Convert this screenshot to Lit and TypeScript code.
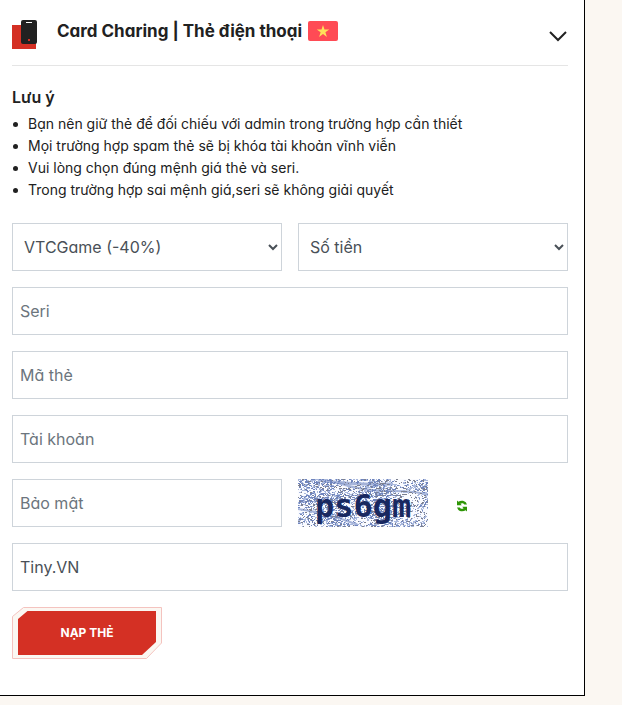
import { LitElement, html, css } from "lit";
import { customElement, state } from "lit/decorators.js";

const CAPTCHA_W = 130;
const CAPTCHA_H = 48;

/* Builds one path of short speckles from a seeded generator. */
function speckles(seed: number, density: (x: number, y: number) => number): string {
  let s = seed;
  const next = () => {
    s = (Math.imul(s, 1664525) + 1013904223) >>> 0;
    return s / 4294967296;
  };
  let d = "";
  for (let y = 0; y < CAPTCHA_H; y++) {
    for (let x = 0; x < CAPTCHA_W; x++) {
      if (next() < density(x, y)) {
        const w = next() < 0.4 ? 2 : 1;
        d += `M${x} ${y}h${w}v1h-${w}z`;
      }
    }
  }
  return d;
}

const band = (x: number, y: number) => Math.sin(x / 13 + y / 7) * Math.cos(y / 5 - x / 31);
const LIGHT = speckles(11, (x, y) => 0.26 + 0.16 * band(x, y));
const MID = speckles(29, (x, y) => (x < 95 ? 0.18 : 0.1) + 0.14 * band(x, y));
const DARK = speckles(73, () => 0.08);

@customElement("captcha-image")
export class CaptchaImage extends LitElement {
  static styles = css`
    :host {
      display: block;
    }
    .image {
      display: block;
      font-family: "DejaVu Sans Mono", monospace;
      font-weight: 700;
      font-size: 32px;
    }
  `;

  render() {
    return html`<svg class="image" width="130" height="48" viewBox="0 0 130 48" role="img" aria-label="Captcha">
      <rect width="130" height="48" fill="#fafbff" />
      <g fill="none" stroke="#7f93c8" stroke-opacity=".7" stroke-width="3">
        <path d="M20 1Q50 6 95 5" />
        <path d="M40 4Q65 12 92 12T130 16" stroke-width="2" />
        <path d="M0 30Q30 34 60 46" stroke-width="2" />
      </g>
      <g shape-rendering="crispEdges">
        <path d=${LIGHT} fill="#a9b8dd" />
        <path d=${MID} fill="#7085bd" />
        <path d=${DARK} fill="#7c8090" />
      </g>
      <text x="17" y="38" fill="#182860">ps6gm</text>
    </svg>`;
  }
}

@customElement("app-root")
export class AppRoot extends LitElement {
  @state() private open = true;

  static styles = css`
    :host {
      display: block;
      box-sizing: border-box;
      min-height: 100vh;
      padding: 0 37px 9px 0;
      background: #fbf7f2;
      color: #212121;
      font-family: Inter, "Noto Sans", sans-serif;
      font-feature-settings: "cv11";
    }
    * {
      box-sizing: border-box;
    }
    .panel {
      padding: 0 16px 36px 12px;
      background: #fff;
      border: solid #000;
      border-width: 0 1px 1px 0;
    }
    .head {
      display: flex;
      align-items: center;
      height: 66px;
      border-bottom: 1px solid #e5e5e5;
    }
    .phone {
      flex: none;
      margin: 4px 19px 0 0;
    }
    .title {
      flex: 1;
      display: flex;
      align-items: center;
      gap: 6px;
      margin: 0;
      padding-bottom: 4px;
      font-size: 17px;
      line-height: 24px;
      font-weight: 700;
      white-space: nowrap;
    }
    .toggle {
      display: flex;
      padding: 6px 0 0;
      border: 0;
      background: none;
      cursor: pointer;
    }
    .note {
      margin: 19px 0 4px;
      font-size: 16px;
      line-height: 24px;
      font-weight: 600;
    }
    .rules {
      display: flex;
      flex-direction: column;
      margin: 0 0 22px;
      padding: 0;
      list-style: none;
      font-size: 14px;
      line-height: 22px;
    }
    .rule {
      display: flex;
      align-items: center;
      gap: 10px;
    }
    .rule::before {
      content: "";
      flex: none;
      width: 5px;
      height: 5px;
      margin-left: 1px;
      border-radius: 50%;
      background: #212121;
    }
    .form {
      display: grid;
      grid-template-columns: 1fr 1fr;
      gap: 16px;
    }
    .field {
      width: 100%;
      min-width: 0;
      height: 48px;
      margin: 0;
      padding: 0 7px;
      border: 1px solid #ced4da;
      border-radius: 0;
      background: #fff;
      color: #495057;
      font: inherit;
      font-feature-settings: inherit;
      font-size: 16px;
    }
    .field::placeholder {
      color: #6c757d;
      opacity: 1;
    }
    .select {
      padding: 0 1px 0 7px;
    }
    .wide {
      grid-column: 1 / -1;
    }
    .captcha {
      display: flex;
      align-items: center;
      gap: 28px;
    }
    .reload {
      display: flex;
      padding: 5px 0 0;
      border: 0;
      background: none;
      cursor: pointer;
    }
    .submit {
      position: relative;
      width: 150px;
      height: 52px;
      padding: 0 0 2px;
      border: 0;
      background: none;
      color: #fff;
      font: inherit;
      font-size: 12px;
      font-weight: 700;
      cursor: pointer;
    }
    .shape {
      position: absolute;
      inset: 0;
    }
    .caption {
      position: relative;
    }
  `;

  private text(name: string, cls = "wide", value = "") {
    return html`<input class="field ${cls}" type="text" aria-label=${name} placeholder=${name} .value=${value} />`;
  }

  private body() {
    return html`
      <h3 class="note">Lưu ý</h3>
      <ul class="rules">
        <li class="rule">Bạn nên giữ thẻ để đối chiếu với admin trong trường hợp cần thiết</li>
        <li class="rule">Mọi trường hợp spam thẻ sẽ bị khóa tài khoản vĩnh viễn</li>
        <li class="rule">Vui lòng chọn đúng mệnh giá thẻ và seri.</li>
        <li class="rule">Trong trường hợp sai mệnh giá,seri sẽ không giải quyết</li>
      </ul>
      <form class="form" @submit=${(e: Event) => e.preventDefault()}>
        <select class="field select" aria-label="Loại thẻ"><option>VTCGame (-40%)</option></select>
        <select class="field select" aria-label="Số tiền"><option>Số tiền</option></select>
        ${this.text("Seri")} ${this.text("Mã thẻ")} ${this.text("Tài khoản")} ${this.text("Bảo mật", "")}
        <div class="captcha">
          <captcha-image></captcha-image>
          <button class="reload" type="button" aria-label="Đổi mã">
            <svg width="12" height="12" viewBox="0 0 12 12" fill="#2f9607">
              <path d="M1 0.500L2.400 1.800C4.400 0.200 8 0.300 9.800 2.300L11 4.500H8.300C7.500 3.200 5.800 2.900 4.400 3.800L5.800 5.200H1z" />
              <path d="M11 11.500L9.600 10.200C7.600 11.800 4 11.700 2.200 9.700L1 7.500H3.700C4.500 8.800 6.200 9.100 7.600 8.200L6.200 6.800H11z" />
            </svg>
          </button>
        </div>
        ${this.text("Tên miền", "wide", "Tiny.VN")}
        <button class="submit" type="submit">
          <svg class="shape" width="150" height="52" viewBox="0 0 150 52" aria-hidden="true">
            <path d="M11.500 .5H149.500V36L134.500 51.500H.5V9.500z" fill="#fbf7f2" stroke="#f4c3bf" />
            <path d="M15.500 4H144V35L130 48H6V12z" fill="#d43024" />
          </svg>
          <span class="caption">NẠP THẺ</span>
        </button>
      </form>
    `;
  }

  render() {
    return html`<main class="panel">
      <header class="head">
        <svg class="phone" width="26" height="30" viewBox="0 0 26 30" aria-hidden="true">
          <path d="M0 5h24v24H0z" fill="#d43024" />
          <rect x="9" y="0" width="16" height="24" rx="2" fill="#212121" />
          <path d="M14 2.500h6" stroke="#fff" />
          <path d="M16 19h2v2h-2z" fill="#d43024" />
        </svg>
        <h2 class="title">
          Card Charing | Thẻ điện thoại
          <svg width="30" height="20" viewBox="0 0 30 20" role="img" aria-label="Việt Nam">
            <rect width="30" height="20" rx="2" fill="#ff4b55" />
            <path d="M15 4l1.500 4.500h4.700l-3.800 2.800 1.500 4.600L15 13.100l-3.900 2.800 1.500-4.600-3.800-2.800h4.700z" fill="#ffe15a" />
          </svg>
        </h2>
        <button class="toggle" type="button" aria-label="Thu gọn" aria-expanded=${this.open ? "true" : "false"}
          @click=${() => (this.open = !this.open)}>
          <svg width="20" height="12" viewBox="0 0 20 12" fill="none">
            <path d="M2 2l8 8 8-8" stroke="#212121" stroke-width="2" />
          </svg>
        </button>
      </header>
      ${this.open ? this.body() : null}
    </main>`;
  }
}
